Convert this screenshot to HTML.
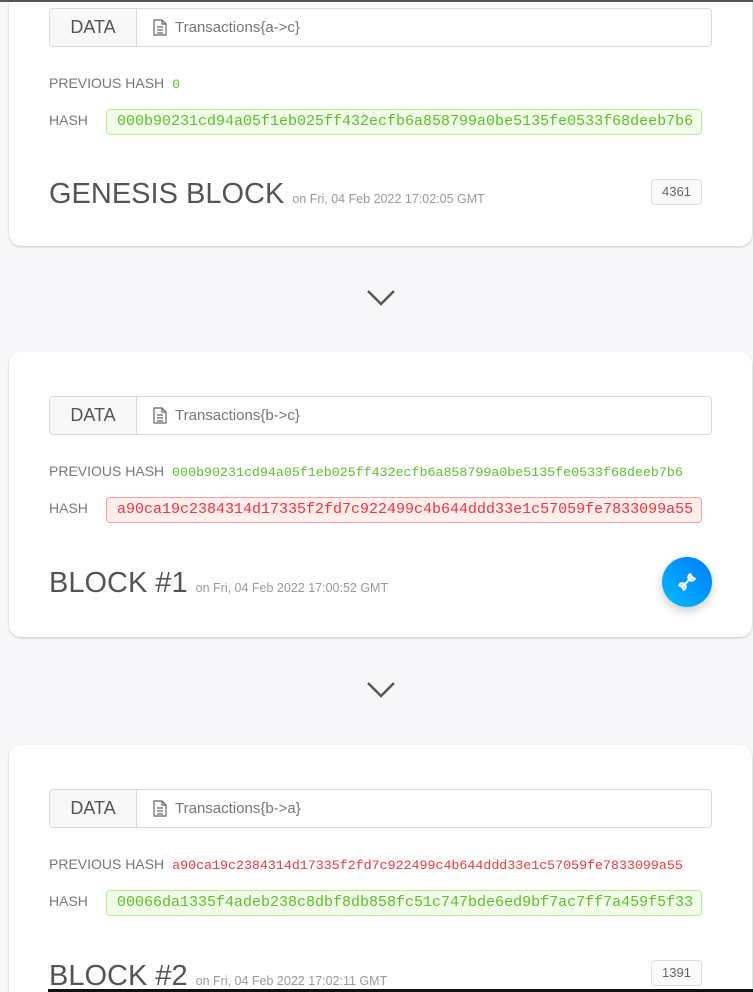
<!DOCTYPE html>
<html><head><meta charset="utf-8"><style>
*{box-sizing:border-box;margin:0;padding:0}
html,body{width:753px;height:992px;overflow:hidden}
body{background:#f7f7f9;font-family:"Liberation Sans",sans-serif;position:relative}
.topline{position:absolute;left:0;top:0;width:753px;height:2px;background:#555;z-index:5}
.botline{position:absolute;left:48px;top:989px;width:705px;height:3px;background:#111;z-index:5}
.card{position:absolute;left:9px;width:743px;height:285px;background:#fff;border-radius:12px;box-shadow:0 1px 2px rgba(0,0,0,.2)}
.data{position:absolute;left:40px;top:44px;width:663px;height:39px;border:1px solid #d9d9d9;border-radius:4px;display:flex}
.data .l{width:87px;background:#f8f8f8;border-right:1px solid #d9d9d9;color:#555;font-size:18px;line-height:37px;text-align:center;border-radius:4px 0 0 4px}
.data .r{padding-left:16px;color:#777;font-size:15px;line-height:37px;display:flex;align-items:center}
.data .r svg{margin-right:8px}
.ph{position:absolute;left:40px;top:111px;font-size:14px;color:#777;white-space:nowrap}
.ph span{font-family:"Liberation Mono",monospace;font-size:13.3px;margin-left:8px}
.hl{position:absolute;left:40px;top:148px;font-size:14px;color:#777}
.hb{position:absolute;left:97px;top:145px;width:596px;height:26px;border-radius:4px;font-family:"Liberation Mono",monospace;font-size:15px;line-height:24px;padding-left:10px;white-space:nowrap}
.g{background:#f1fde9;border:1px solid #b9ee95;color:#5cbf2a}
.rd{background:#ffeeee;border:1px solid #f7a0a0;color:#f0343c}
.title{position:absolute;left:40px;top:215px;font-size:29px;color:#555;letter-spacing:0;white-space:nowrap}
.title small{font-size:12.5px;color:#999;letter-spacing:0;margin-left:8px}
.badge{position:absolute;left:642px;top:215px;width:51px;height:26px;border:1px solid #ddd;border-radius:4px;background:#fafafa;color:#666;font-size:13px;line-height:24px;text-align:center}
.chev{position:absolute;left:366px}
.fab{position:absolute;left:662px;top:557px;width:50px;height:50px;border-radius:50%;background:linear-gradient(45deg,#00bfff,#0078ff);box-shadow:0 4px 10px rgba(0,0,0,.2);display:flex;align-items:center;justify-content:center}
</style></head><body>
<div class="topline"></div>

<div class="card" style="top:-39px">
 <div class="data" style="top:47px"><div class="l">DATA</div><div class="r"><svg width="14" height="17" viewBox="0 0 14 17"><path d="M1 1h8l4 4v11H1z M9 1v4h4 M4 8h6M4 11h6M4 14h6" fill="none" stroke="#666" stroke-width="1.2"/></svg>Transactions{a-&gt;c}</div></div>
 <div class="ph" style="top:114px">PREVIOUS HASH<span style="color:#5cbf2a">0</span></div>
 <div class="hl" style="top:151px">HASH</div>
 <div class="hb g" style="top:148px">000b90231cd94a05f1eb025ff432ecfb6a858799a0be5135fe0533f68deeb7b6</div>
 <div class="title" style="top:217px">GENESIS BLOCK<small>on Fri, 04 Feb 2022 17:02:05 GMT</small></div>
 <div class="badge" style="top:218px">4361</div>
</div>

<svg class="chev" style="top:289px" width="30" height="18"><path d="M2 2l13 13L28 2" fill="none" stroke="#555" stroke-width="2.5"/></svg>

<div class="card" style="top:352px">
 <div class="data"><div class="l">DATA</div><div class="r"><svg width="14" height="17" viewBox="0 0 14 17"><path d="M1 1h8l4 4v11H1z M9 1v4h4 M4 8h6M4 11h6M4 14h6" fill="none" stroke="#666" stroke-width="1.2"/></svg>Transactions{b-&gt;c}</div></div>
 <div class="ph">PREVIOUS HASH<span style="color:#5cbf2a">000b90231cd94a05f1eb025ff432ecfb6a858799a0be5135fe0533f68deeb7b6</span></div>
 <div class="hl">HASH</div>
 <div class="hb rd">a90ca19c2384314d17335f2fd7c922499c4b644ddd33e1c57059fe7833099a55</div>
 <div class="title">BLOCK #1<small>on Fri, 04 Feb 2022 17:00:52 GMT</small></div>
</div>

<svg class="chev" style="top:681px" width="30" height="18"><path d="M2 2l13 13L28 2" fill="none" stroke="#555" stroke-width="2.5"/></svg>

<div class="card" style="top:745px">
 <div class="data"><div class="l">DATA</div><div class="r"><svg width="14" height="17" viewBox="0 0 14 17"><path d="M1 1h8l4 4v11H1z M9 1v4h4 M4 8h6M4 11h6M4 14h6" fill="none" stroke="#666" stroke-width="1.2"/></svg>Transactions{b-&gt;a}</div></div>
 <div class="ph">PREVIOUS HASH<span style="color:#f0343c">a90ca19c2384314d17335f2fd7c922499c4b644ddd33e1c57059fe7833099a55</span></div>
 <div class="hl">HASH</div>
 <div class="hb g">00066da1335f4adeb238c8dbf8db858fc51c747bde6ed9bf7ac7ff7a459f5f33</div>
 <div class="title">BLOCK #2<small>on Fri, 04 Feb 2022 17:02:11 GMT</small></div>
 <div class="badge">1391</div>
</div>

<div class="fab"><svg width="22" height="22" viewBox="0 0 20 20"><path d="M6 14l8-8 M13 3a3 3 0 1 0 4 4l-2-1-1-1z M7 17a3 3 0 1 0-4-4l2 1 1 1z" fill="none" stroke="#fff" stroke-width="2" stroke-linecap="round"/></svg></div>
<div class="botline"></div>
</body></html>
